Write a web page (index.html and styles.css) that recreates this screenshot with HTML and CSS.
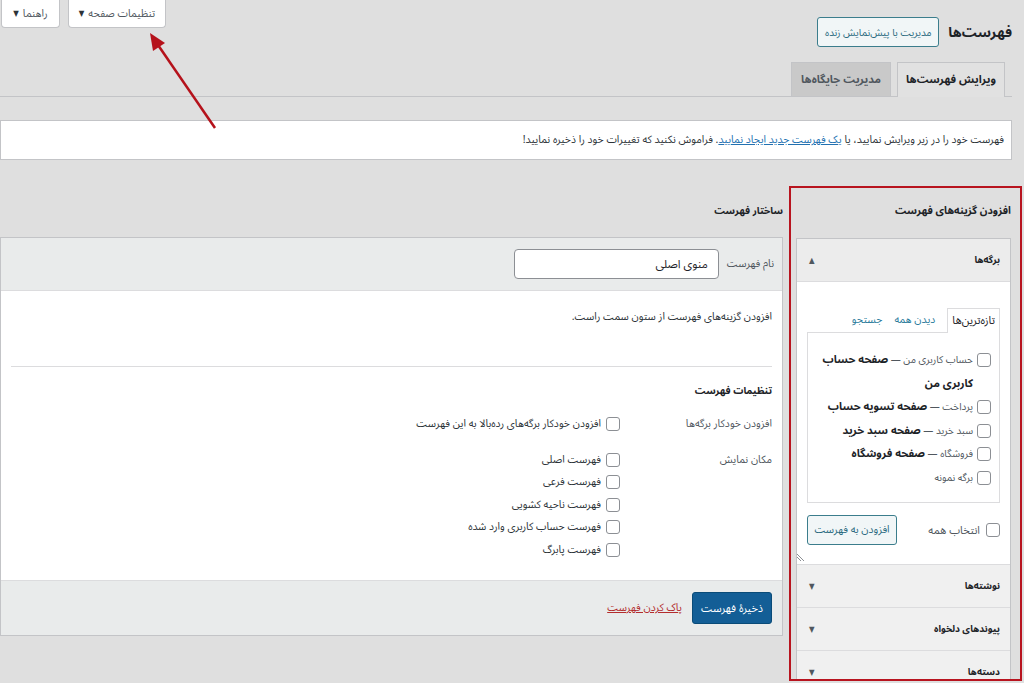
FILE: index.html
```html
<!DOCTYPE html>
<html dir="rtl" lang="fa">
<head>
  <meta charset="UTF-8" />
  <link rel="stylesheet" href="styles.css">
</head>
<body>
  <div class="wrap">
    <div class="top-bar">
      <div class="title-group">
        <h1>فهرست‌ها</h1>
        <button class="btn-outline btn-live">مدیریت با پیش‌نمایش زنده</button>
      </div>
      <div class="screen-meta">
        <button class="meta-btn meta-options">تنظیمات صفحه <span class="caret">▼</span></button>
        <button class="meta-btn meta-help">راهنما <span class="caret">▼</span></button>
      </div>
    </div>

    <div class="nav-tabs">
      <div class="nav-tab active">ویرایش فهرست‌ها</div>
      <div class="nav-tab">مدیریت جایگاه‌ها</div>
    </div>

    <div class="notice">
      <span>فهرست خود را در زیر ویرایش نمایید، یا <a href="#">یک فهرست جدید ایجاد نمایید</a>. فراموش نکنید که تغییرات خود را ذخیره نمایید!</span>
    </div>

    <div class="columns">
      <div class="settings-column">
        <h2>افزودن گزینه‌های فهرست</h2>
        <div class="accordion">
          <div class="acc-section open">
            <div class="acc-title">برگه‌ها <span class="acc-arrow">▲</span></div>
            <div class="acc-body">
              <div class="item-tabs">
                <span class="item-tab active">تازه‌ترین‌ها</span>
                <span class="item-tab">دیدن همه</span>
                <span class="item-tab">جستجو</span>
              </div>
              <div class="item-panel">
                <label class="item"><input type="checkbox"><span>حساب کاربری من — <b>صفحه حساب کاربری من</b></span></label>
                <label class="item"><input type="checkbox"><span>پرداخت — <b>صفحه تسویه حساب</b></span></label>
                <label class="item"><input type="checkbox"><span>سبد خرید — <b>صفحه سبد خرید</b></span></label>
                <label class="item"><input type="checkbox"><span>فروشگاه — <b>صفحه فروشگاه</b></span></label>
                <label class="item"><input type="checkbox"><span>برگه نمونه</span></label>
              </div>
              <div class="add-row">
                <label class="select-all"><input type="checkbox">انتخاب همه</label>
                <button class="btn-outline btn-add">افزودن به فهرست</button>
              </div>
              <svg class="grip" width="8" height="8" viewBox="0 0 8 8">
                <path d="M0 0 L7 7 M0 3 L4 7" stroke="#8c8f94" stroke-width="1" fill="none"/>
              </svg>
            </div>
          </div>
          <div class="acc-section">
            <div class="acc-title">نوشته‌ها <span class="acc-arrow">▼</span></div>
          </div>
          <div class="acc-section">
            <div class="acc-title">پیوندهای دلخواه <span class="acc-arrow">▼</span></div>
          </div>
          <div class="acc-section">
            <div class="acc-title">دسته‌ها <span class="acc-arrow">▼</span></div>
          </div>
        </div>
      </div>

      <div class="management-column">
        <h2>ساختار فهرست</h2>
        <div class="menu-edit">
          <div class="menu-header">
            <label class="name-label">نام فهرست</label>
            <input class="name-input" type="text" value="منوی اصلی">
          </div>
          <div class="menu-body">
            <p class="hint">افزودن گزینه‌های فهرست از ستون سمت راست.</p>
            <hr>
            <h3>تنظیمات فهرست</h3>
            <div class="setting-row first">
              <div class="setting-label">افزودن خودکار برگه‌ها</div>
              <div class="setting-field">
                <label class="opt"><input type="checkbox">افزودن خودکار برگه‌های رده‌بالا به این فهرست</label>
              </div>
            </div>
            <div class="setting-row">
              <div class="setting-label">مکان نمایش</div>
              <div class="setting-field">
                <label class="opt"><input type="checkbox">فهرست اصلی</label>
                <label class="opt"><input type="checkbox">فهرست فرعی</label>
                <label class="opt"><input type="checkbox">فهرست ناحیه کشویی</label>
                <label class="opt"><input type="checkbox">فهرست حساب کاربری وارد شده</label>
                <label class="opt"><input type="checkbox">فهرست پابرگ</label>
              </div>
            </div>
          </div>
          <div class="menu-footer">
            <button class="btn-primary">ذخیرهٔ فهرست</button>
            <a class="delete-link" href="#">پاک کردن فهرست</a>
          </div>
        </div>
      </div>
    </div>
  </div>

  <svg class="arrow" width="1024" height="683" viewBox="0 0 1024 683">
    <line x1="215" y1="128" x2="158" y2="45" stroke="#b5121b" stroke-width="2.5"/>
    <polygon points="150,33 165,43 153,51" fill="#b5121b"/>
  </svg>
</body>
</html>
```

FILE: styles.css
```css
html, body {
  margin: 0;
}

body {
  width: 1024px;
  height: 683px;
  overflow: hidden;
  position: relative;
  background: #dfdfdf;
  color: #2c3338;
  font-family: "Noto Sans Arabic", "DejaVu Sans Condensed", "DejaVu Sans", sans-serif;
  font-size: 10.5px;
}

button,
input {
  font-family: inherit;
}

button {
  cursor: pointer;
}

.wrap {
  padding-right: 12px;
}

/* header */

.top-bar {
  display: flex;
  justify-content: space-between;
  align-items: flex-start;
  height: 47px;
}

.title-group {
  display: flex;
  align-items: center;
  gap: 9px;
  margin-top: 17px;
}

h1 {
  margin: 0;
  font-size: 14px;
  font-weight: bold;
  color: #1d2327;
}

.btn-outline {
  height: 30px;
  padding: 0;
  border: 1px solid #3b7d8c;
  border-radius: 3px;
  background: #f1f6f7;
  color: #2a6a80;
  font-size: 10px;
}

.btn-live {
  width: 122px;
}

.screen-meta {
  display: flex;
  gap: 8px;
  margin-left: 1px;
}

.meta-btn {
  display: flex;
  align-items: center;
  justify-content: center;
  gap: 4px;
  height: 28px;
  padding: 0;
  background: #fff;
  border: 1px solid #c3c4c7;
  border-top: none;
  border-radius: 0 0 4px 4px;
  color: #50575e;
  font-size: 10.5px;
}

.meta-options {
  width: 98px;
}

.meta-help {
  width: 59px;
}

.caret {
  font-size: 8px;
  color: #2c3338;
}

/* tabs */

.nav-tabs {
  display: flex;
  align-items: flex-end;
  gap: 6px;
  height: 35px;
  margin-top: 14px;
  padding-right: 7px;
  border-bottom: 1px solid #c3c4c7;
}

.nav-tab {
  width: 100px;
  box-sizing: border-box;
  height: 34px;
  line-height: 34px;
  text-align: center;
  border: 1px solid #c3c4c7;
  border-bottom: none;
  background: #c9c9c9;
  color: #50575e;
  font-size: 11px;
  font-weight: bold;
}

.nav-tab.active {
  width: 108px;
  height: 35px;
  margin-bottom: -1px;
  background: #e1e1e1;
  color: #1d2327;
}

/* notice */

.notice {
  display: flex;
  align-items: center;
  height: 38px;
  margin-top: 23px;
  padding: 0 7px;
  background: #fff;
  border: 1px solid #c3c4c7;
}

.notice a {
  color: #2271b1;
}

/* columns */

.columns {
  display: flex;
  gap: 6px;
  margin-top: 26px;
  margin-right: -10px;
}

h2 {
  margin: 13px 0 17px;
  font-size: 10.5px;
  line-height: 20px;
  font-weight: bold;
  color: #1d2327;
}

.settings-column {
  width: 233px;
  height: 495px;
  box-sizing: border-box;
  padding: 0 9px 0 5px;
  border: 2px solid #b8141f;
  overflow: hidden;
}

.management-column {
  flex: 1;
}

.management-column h2 {
  margin: 15px 0 16px;
  font-size: 10px;
}

/* accordion */

.accordion {
  background: #fff;
  border: 1px solid #c3c4c7;
}

.acc-section {
  border-bottom: 1px solid #dcdcde;
}

.acc-title {
  display: flex;
  justify-content: space-between;
  align-items: center;
  height: 42px;
  padding: 0 10px 0 12px;
  background: #f0f0f0;
  font-size: 9.5px;
  font-weight: bold;
  color: #1d2327;
}

.open .acc-title {
  border-bottom: 1px solid #dcdcde;
  background: #ececec;
}

.acc-arrow {
  font-size: 8px;
  color: #50575e;
}

.acc-body {
  position: relative;
  padding: 26px 10px 19px 10px;
}

.item-tabs {
  display: flex;
  gap: 12px;
  height: 25px;
}

.item-tab {
  line-height: 24px;
  color: #2a7b9b;
  font-size: 10.5px;
}

.item-tab.active {
  padding: 0 4px;
  background: #fff;
  border: 1px solid #dcdcde;
  border-bottom: none;
  color: #1d2327;
  font-size: 11px;
  position: relative;
  z-index: 1;
}

.item-panel {
  height: 154px;
  margin-top: -1px;
  padding: 15px 8px 0 4px;
  border: 1px solid #dcdcde;
}

.item {
  display: flex;
  gap: 4px;
  line-height: 23.5px;
  font-size: 10px;
  color: #50575e;
}

.item b {
  font-size: 11px;
  color: #1d2327;
}

input[type="checkbox"] {
  appearance: none;
  flex: none;
  width: 14px;
  height: 14px;
  margin: 5px 0 0 0;
  background: #fff;
  border: 1px solid #8c8f94;
  border-radius: 3px;
}

.add-row {
  display: flex;
  justify-content: space-between;
  align-items: center;
  margin-top: 12px;
}

.select-all {
  display: flex;
  align-items: center;
  gap: 6px;
  font-size: 11px;
  color: #50575e;
}

.select-all input {
  margin: 0;
}

.btn-add {
  width: 90px;
  font-size: 10.5px;
}

.grip {
  position: absolute;
  left: 0;
  bottom: 2px;
}

/* menu structure box */

.menu-edit {
  background: #fff;
  border: 1px solid #c3c4c7;
}

.menu-header {
  display: flex;
  align-items: center;
  gap: 8px;
  padding: 11px 8px 11px 10px;
  background: #e9ebeb;
  border-bottom: 1px solid #dcdcde;
}

.name-label {
  font-size: 10.5px;
  color: #50575e;
}

.name-input {
  width: 205px;
  height: 30px;
  box-sizing: border-box;
  padding: 0 10px;
  border: 1px solid #8c8f94;
  border-radius: 4px;
  font-size: 11.5px;
  color: #1d2327;
}

.menu-body {
  padding: 0 10px 19px 10px;
}

.hint {
  margin: 17px 0 0;
  line-height: 18px;
}

.menu-body hr {
  margin: 40px 0 0;
  border: none;
  border-top: 1px solid #dcdcde;
}

h3 {
  margin: 14px 0 0;
  line-height: 20px;
  font-size: 10px;
  font-weight: bold;
  color: #1d2327;
}

.setting-row {
  display: flex;
  margin-top: 13px;
}

.setting-row.first {
  margin-top: 12px;
}

.setting-label {
  width: 152px;
  line-height: 22px;
  color: #50575e;
}

.setting-field {
  display: flex;
  flex-direction: column;
}

.opt {
  display: flex;
  gap: 5px;
  height: 22.5px;
  line-height: 22px;
  color: #2c3338;
}

.opt input {
  margin-top: 4px;
}

.menu-footer {
  display: flex;
  align-items: center;
  gap: 10px;
  padding: 11px 10px;
  background: #e9ebeb;
  border-top: 1px solid #dcdcde;
}

.btn-primary {
  width: 80px;
  height: 32px;
  padding: 0;
  border: 1px solid #0a4b78;
  border-radius: 3px;
  background: #135e96;
  color: #fff;
  font-size: 11px;
}

.delete-link {
  color: #b32d2e;
}

/* annotation arrow */

.arrow {
  position: absolute;
  top: 0;
  left: 0;
  pointer-events: none;
}
```
